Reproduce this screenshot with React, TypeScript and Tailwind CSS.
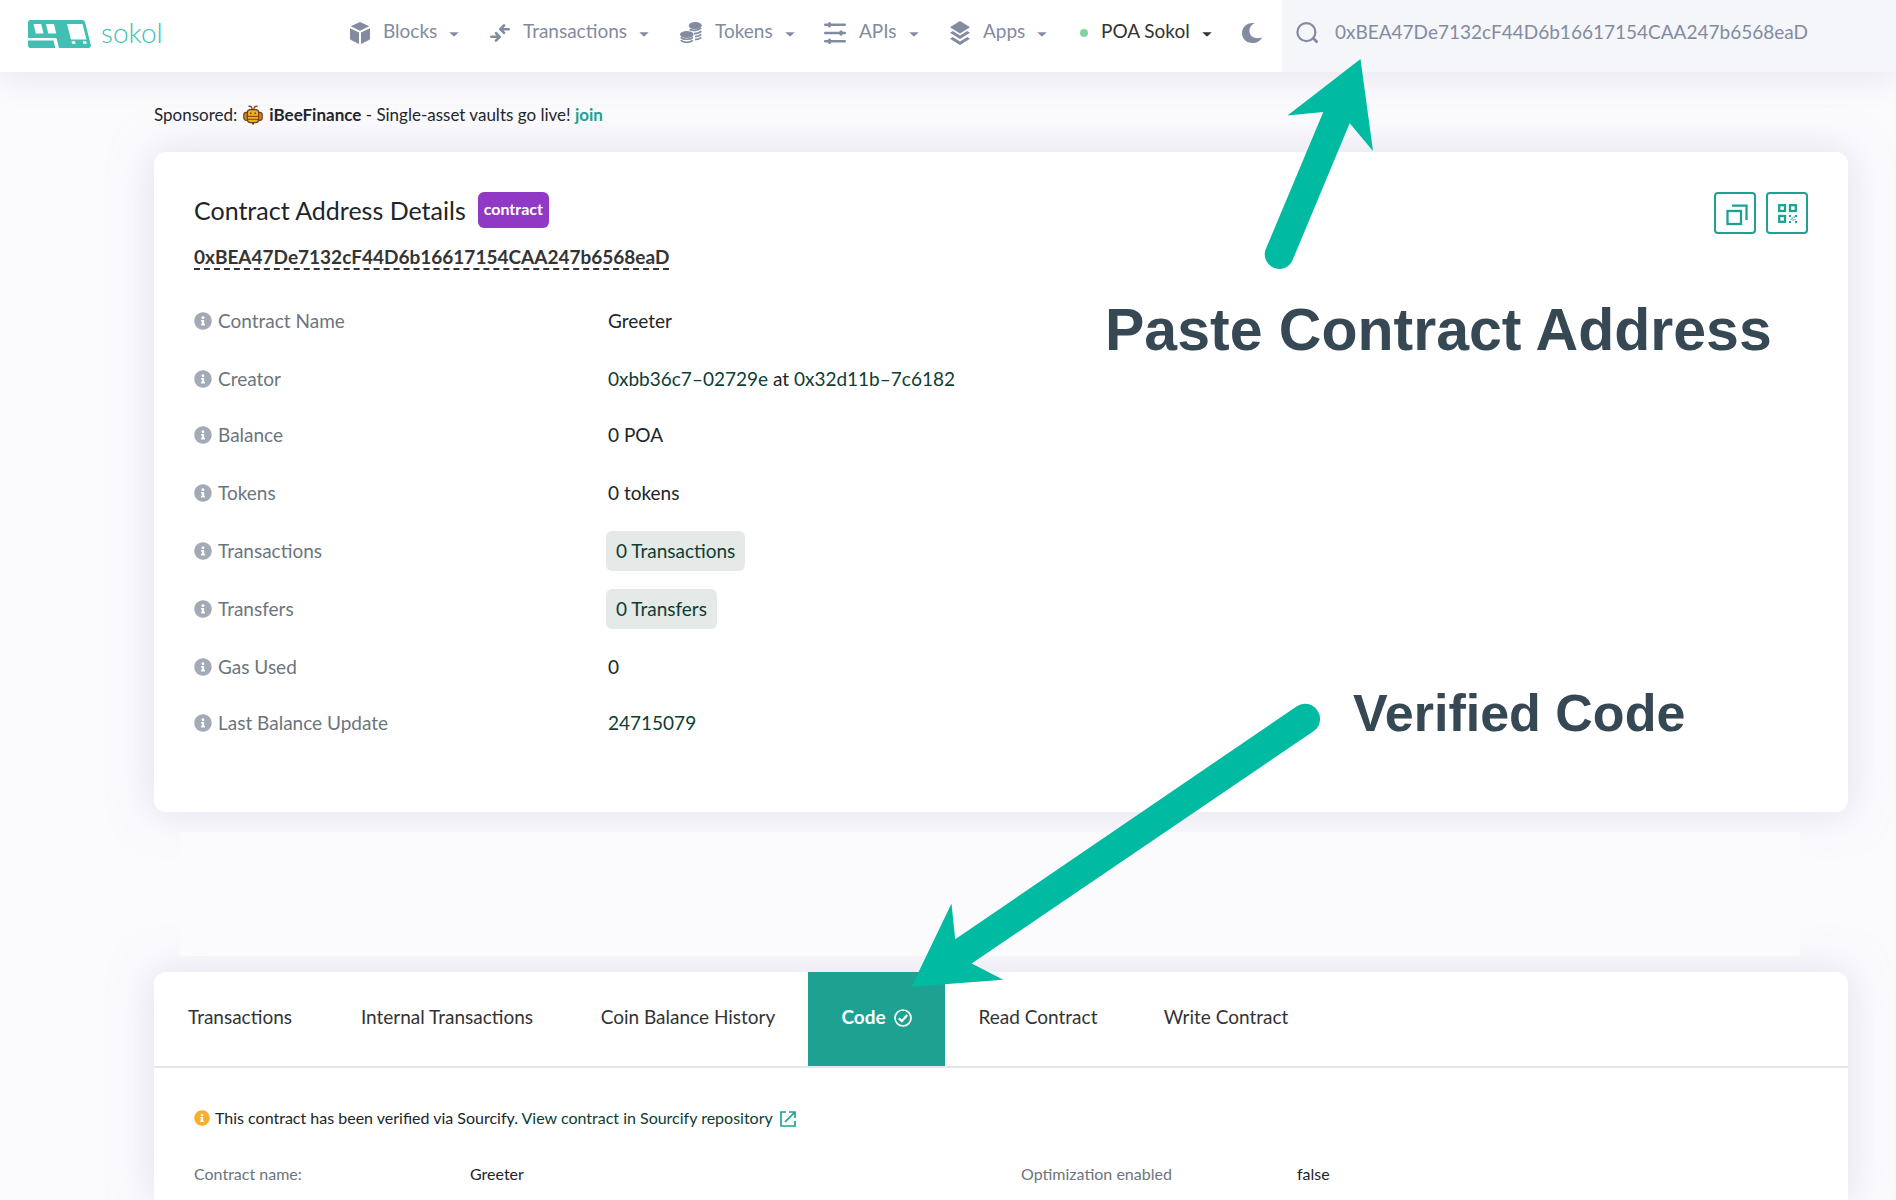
import { useState, type ReactNode } from "react";
import { FaInfoCircle } from "react-icons/fa";

function Caret() {
  return (
    <svg className="ml-3 mt-0.5 h-[5px] w-[10px] shrink-0" viewBox="0 0 10 5" fill="currentColor" aria-hidden="true">
      <path d="M.3.300h9.400L5.500 4.300h-1z" />
    </svg>
  );
}

function Logo() {
  return (
    <svg className="h-7 w-[63px]" viewBox="0 0 63 28" aria-hidden="true">
      <path
        fill="#40bfb2"
        fillRule="evenodd"
        d="M2.500 0H54c1.600 0 2.700.8 3.100 2.300L62.800 25c.4 1.700-.5 3-2.200 3H31l-2.300-9.300c-.1-.5-.5-.8-1-.8H0V2.500C0 1 1 0 2.500 0zM5.500 4l2.300 9.500h7.700L13.200 4zM18 4l2.300 9.500h7.900L26 4zM39 4l4 15.500h15.500L54.500 4zM43.500 21.300l.7 2.400h3.500l-.7-2.400zM54.700 21.300l.7 2.400h3.500l-.7-2.400z"
      />
      <path fill="#40bfb2" d="M0 20.500h25.500L27.300 28H2.500C1 28 0 27 0 25.500z" />
    </svg>
  );
}

function BlocksIcon() {
  return (
    <svg className="h-[22px] w-5" viewBox="0 0 20 22" fill="currentColor" aria-hidden="true">
      <path d="M10 0l9.200 4.200L10 8.800.8 4.200zM0 6.200l9 4.400V22l-8-4c-.6-.3-1-.8-1-1.500zM20 6.200l-9 4.400V22l8-4c.6-.3 1-.8 1-1.500z" />
    </svg>
  );
}

function TransactionsIcon() {
  return (
    <svg className="h-[18px] w-5" viewBox="0 0 20 18" fill="none" stroke="currentColor" strokeWidth="2.600" strokeLinecap="round" strokeLinejoin="round" aria-hidden="true">
      <path d="M18.700 5.200h-7.500M14 1.500l-3.700 3.700L14 8.900" />
      <path d="M1.300 12.800h7.500M6 9.100l3.700 3.700L6 16.500" />
    </svg>
  );
}

function TokensIcon() {
  return (
    <svg className="h-[22px] w-[22px]" viewBox="0 0 22 22" fill="currentColor" aria-hidden="true">
      <ellipse cx="15.300" cy="3.600" rx="6.500" ry="3.600" />
      <ellipse cx="6.800" cy="12.500" rx="6.800" ry="3.400" />
      <g fill="none" stroke="currentColor" strokeWidth="1.700">
        <path d="M9.500 7.300c3 1.800 9 1.400 11.700-1.300" />
        <path d="M14 11.600c3 0 5.600-.8 7.300-2.400M15 14.600c2.600-.1 4.800-.9 6.300-2.300M15 17.600c2.600-.1 4.800-.9 6.300-2.300" />
        <path d="M.7 15.300c2.500 2.600 9.700 2.600 12.200 0M.7 18.300c2.500 2.800 9.700 2.800 12.200 0" />
      </g>
    </svg>
  );
}

function ApisIcon() {
  return (
    <svg className="h-[22px] w-[22px]" viewBox="0 0 22 22" fill="currentColor" aria-hidden="true">
      <rect y="1.600" width="22" height="2.400" rx="1.200" />
      <rect y="9.800" width="22" height="2.400" rx="1.200" />
      <rect y="18" width="22" height="2.400" rx="1.200" />
      <rect x="4" y="0" width="3" height="5.600" rx="1.500" />
      <rect x="15.500" y="8.200" width="3" height="5.600" rx="1.500" />
      <rect x="4" y="16.400" width="3" height="5.600" rx="1.500" />
    </svg>
  );
}

function AppsIcon() {
  return (
    <svg className="h-6 w-5" viewBox="0 0 20 24" fill="currentColor" aria-hidden="true">
      <path d="M10 0l10 6.300-10 6.200L0 6.300z" />
      <path d="M0 11.800l2.700-1.700 7.300 4.500 7.300-4.500 2.700 1.700-10 6.200z" />
      <path d="M0 17.700l2.700-1.700 7.300 4.500 7.300-4.500 2.700 1.700L10 24z" />
    </svg>
  );
}

function MoonIcon() {
  return (
    <svg className="h-5 w-5" viewBox="0 0 20 20" fill="currentColor" aria-hidden="true">
      <path d="M12.600.2C8.400 2 6.700 6 7.700 9.800c1.100 4.200 5.700 6.800 12.300 4.600C18.500 17.900 14.800 20 10.500 20 4.500 20 0 15.700 0 10.200 0 4.300 5 -.8 12.600.2z" />
    </svg>
  );
}

function SearchIcon() {
  return (
    <svg className="h-[22px] w-[22px]" viewBox="0 0 22 22" fill="none" stroke="currentColor" strokeWidth="2.200" aria-hidden="true">
      <circle cx="10.400" cy="10.200" r="9" />
      <path d="M16.500 15.500l5 5" strokeWidth="2.800" />
    </svg>
  );
}

function BeeIcon() {
  return (
    <svg className="h-5 w-5" viewBox="0 0 20 20" aria-hidden="true">
      <path d="M5.500 1.500c2-1 3.500.5 3.500 2.500M14.500 1.500c-2-1-3.500.5-3.500 2.500" fill="none" stroke="#7b4a2a" strokeWidth="1.400" />
      <rect x=".8" y="7.400" width="18.400" height="8" rx="2.600" fill="#d98a1c" stroke="#6b3d22" strokeWidth="1.200" />
      <rect x="4.300" y="4.600" width="11.400" height="13" rx="3" fill="#f2b01f" stroke="#6b3d22" strokeWidth="1.200" />
      <path d="M5 11.400h10M5 14.400h10" stroke="#8a5424" strokeWidth="1.300" />
      <path d="M7 8.200h1.500M11.500 8.200H13" stroke="#6b3d22" strokeWidth="1.400" />
      <path d="M9 17.500h2v2H9z" fill="#6b3d22" />
    </svg>
  );
}

function CopyIcon() {
  return (
    <svg className="ml-1 mt-1 h-[22px] w-[22px]" viewBox="0 0 22 22" fill="none" stroke="currentColor" strokeWidth="2.300" aria-hidden="true">
      <rect x="1.500" y="7" width="13.500" height="13" />
      <path d="M6 1.700h14.500V16" />
    </svg>
  );
}

function QrIcon() {
  return (
    <svg className="h-[19px] w-[19px]" viewBox="0 0 19 19" fill="currentColor" aria-hidden="true">
      <g fill="none" stroke="currentColor" strokeWidth="2.300">
        <rect x="1.200" y="1.200" width="5.800" height="5.800" />
        <rect x="12" y="1.200" width="5.800" height="5.800" />
        <rect x="1.200" y="12" width="5.800" height="5.800" />
      </g>
      <path d="M11 11h2v2h-2zM17 11h2v2h-2zM13.500 13.500h1.300v1.300h-1.300zM15.500 12.500h1.300v1.300h-1.300zM14.500 15.500h1.300v1.300h-1.300zM11 17h2v2h-2zM17 17h2v2h-2zM12.500 15h1v1h-1zM16.500 15h1v1h-1z" />
    </svg>
  );
}

const navItems = [
  { label: "Blocks", icon: <BlocksIcon /> },
  { label: "Transactions", icon: <TransactionsIcon /> },
  { label: "Tokens", icon: <TokensIcon /> },
  { label: "APIs", icon: <ApisIcon /> },
  { label: "Apps", icon: <AppsIcon /> },
];

function Header() {
  const [query, setQuery] = useState("0xBEA47De7132cF44D6b16617154CAA247b6568eaD");
  return (
    <header className="flex h-[72px] bg-white text-[19px] text-[#828ba0] shadow-[0_0_40px_0_rgba(21,53,80,0.12)]">
      <a href="#home" className="flex flex-1 items-start gap-[10px] pl-7 pt-5" aria-label="sokol home">
        <Logo />
        <span className="-mt-1 text-[28px] font-light leading-8 text-[#40bfb2]">sokol</span>
      </a>
      <nav className="grid h-[66px] grid-cols-[140px_190px_144px_126px_130px_162px_40px] items-center">
        {navItems.map((item) => (
          <button key={item.label} type="button" className="flex items-center">
            {item.icon}
            <span className="-mt-1 ml-[13px]">{item.label}</span>
            <Caret />
          </button>
        ))}
        <button type="button" className="flex items-center text-[#333]">
          <span className="size-2 rounded-full bg-[#80d6a1]" />
          <span className="-mt-1 ml-[13px]">POA Sokol</span>
          <Caret />
        </button>
        <button type="button" aria-label="Dark mode">
          <MoonIcon />
        </button>
      </nav>
      <label className="flex w-[614px] bg-[#f5f6fa] pl-[14px]">
        <span className="flex h-[66px] items-center">
          <SearchIcon />
        </span>
        <input
          aria-label="Search"
          value={query}
          onChange={(e) => setQuery(e.target.value)}
          className="ml-[17px] h-[62px] flex-1 bg-transparent outline-none"
        />
      </label>
    </header>
  );
}

const link = "text-[#0d3d33]";

const details: { label: string; value: ReactNode; row: string }[] = [
  { label: "Contract Name", value: "Greeter", row: "h-[58px]" },
  {
    label: "Creator",
    value: (
      <>
        <a href="#creator" className={link}>0xbb36c7–02729e</a> at <a href="#tx" className={link}>0x32d11b–7c6182</a>
      </>
    ),
    row: "h-[58px]",
  },
  { label: "Balance", value: "0 POA", row: "h-14 pb-0.5" },
  { label: "Tokens", value: "0 tokens", row: "h-[58px]" },
  { label: "Transactions", value: <CountTile text="0 Transactions" />, row: "h-[58px]" },
  { label: "Transfers", value: <CountTile text="0 Transfers" />, row: "h-[58px]" },
  { label: "Gas Used", value: "0", row: "h-[58px]" },
  { label: "Last Balance Update", value: <a href="#block" className={link}>24715079</a>, row: "h-14 pb-0.5" },
];

function CountTile({ text }: { text: string }) {
  return (
    <a href="#list" className="-ml-0.5 flex h-10 items-center rounded-md bg-[#e5e9e7] px-[10px] text-[#0d3d33]">
      {text}
    </a>
  );
}

function DetailsCard() {
  return (
    <section className="rounded-xl bg-white p-10 shadow-[0_0_40px_0_rgba(202,199,226,0.5)]">
      <div className="flex items-start justify-between">
        <h1 className="flex items-center text-[25px] leading-9 text-[#212529]">
          Contract Address Details
          <span className="ml-3 h-9 rounded-md bg-[#9039c4] px-[6px] text-[16px] font-bold leading-[34px] text-white">contract</span>
        </h1>
        <div className="flex h-9 gap-[10px] text-[#1ea191]">
          <button type="button" aria-label="Copy address" className="flex size-[42px] items-center justify-center rounded-sm border-2 border-[#1ea191]">
            <CopyIcon />
          </button>
          <button type="button" aria-label="Show QR code" className="flex size-[42px] items-center justify-center rounded-sm border-2 border-[#1ea191]">
            <QrIcon />
          </button>
        </div>
      </div>
      <h2 className="mt-[18px] h-[62px] text-[19px] font-bold leading-[22px] text-[#333]">
        <span className="inline-block border-b-2 border-dashed border-[#333]">0xBEA47De7132cF44D6b16617154CAA247b6568eaD</span>
      </h2>
      <dl className="-mt-4 pb-5 text-[19px]">
        {details.map((d) => (
          <div key={d.label} className={`flex items-center ${d.row}`}>
            <dt className="flex w-[414px] items-center gap-[6px] text-[#6c757d]">
              <FaInfoCircle className="size-[18px] text-[#a3a9b5]" />
              {d.label}
            </dt>
            <dd className="text-[#212529]">{d.value}</dd>
          </div>
        ))}
      </dl>
    </section>
  );
}

const tabs = ["Transactions", "Internal Transactions", "Coin Balance History", "Code", "Read Contract", "Write Contract"];

function CodeCard() {
  const [active, setActive] = useState("Code");
  return (
    <section className="flex-1 overflow-hidden rounded-t-xl bg-white">
      <div role="tablist" className="grid h-24 grid-cols-[172px_242px_240px_137px_186px_190px] border-b-2 border-[#e2e5ec] text-[19px] text-[#333]">
        {tabs.map((t) => (
          <button
            key={t}
            type="button"
            role="tab"
            aria-selected={t === active}
            onClick={() => setActive(t)}
            className={`flex items-center justify-center gap-2 pb-1 ${t === active ? "bg-[#1ea191] font-bold text-white" : ""}`}
          >
            {t}
            {t === "Code" && (
              <svg className="mt-0.5 size-[18px]" viewBox="0 0 18 18" fill="none" stroke="currentColor" strokeWidth="1.700" aria-hidden="true">
                <circle cx="9" cy="9" r="8" />
                <path d="M4.800 9.200l3 2.900 5.400-6" strokeWidth="2.200" />
              </svg>
            )}
          </button>
        ))}
      </div>
      <div className="px-10 pt-[38px] text-[16px] leading-6 text-[#212529]">
        <p className="flex items-center">
          <FaInfoCircle className="mr-[5px] size-4 text-[#f7b02c]" />
          <span>
            This contract has been verified via Sourcify. <a href="#sourcify" className={link}>View contract in Sourcify repository</a>
          </span>
          <svg className="ml-[7px] mt-0.5 size-4 text-[#1ea191]" viewBox="0 0 16 16" fill="none" stroke="currentColor" strokeWidth="1.700" aria-hidden="true">
            <path d="M6 1H1v14h14v-5M9 1h6v6M15 1L5 11" />
          </svg>
        </p>
        <dl className="mt-8 grid grid-cols-2 gap-10">
          <div className="flex">
            <dt className="w-[276px] text-[#6c757d]">Contract name:</dt>
            <dd>Greeter</dd>
          </div>
          <div className="flex">
            <dt className="w-[276px] text-[#6c757d]">Optimization enabled</dt>
            <dd>false</dd>
          </div>
        </dl>
      </div>
    </section>
  );
}

function Annotations() {
  return (
    <div className="pointer-events-none absolute left-0 top-0 z-10 font-['Liberation_Sans',Arial,sans-serif] font-bold text-[#374855]">
      <svg className="h-[1000px] w-[1500px]" viewBox="0 0 1500 1000" fill="#00bba2" aria-hidden="true">
        <path d="M1360.500 59L1287.500 115.500 1323.300 112 1265.600 249.500A14.500 14.500 0 0 0 1292.400 260.500L1349.700 123.300 1373 151z" />
        <path d="M911.500 986.700L951.500 903.500 955.200 939.200 1296.500 706.500A15 15 0 0 1 1313.500 731.300L971.700 963.500 1003.300 979.800z" />
      </svg>
      <p className="absolute left-[1105px] top-[298px] whitespace-nowrap text-[59px] leading-[64px]">Paste Contract Address</p>
      <p className="absolute left-[1353px] top-[681px] whitespace-nowrap text-[52px] leading-[64px]">Verified Code</p>
    </div>
  );
}

export default function App() {
  return (
    <div className="relative flex min-h-screen flex-col overflow-hidden bg-[#fbfafd] font-[Lato,'Noto_Sans',sans-serif]">
      <Header />
      <main className="flex flex-1 flex-col pl-[154px] pr-12">
        <p className="flex h-20 items-center pt-1.5 text-[17px] text-[#212529]">
          Sponsored:
          <span className="mx-[6px]">
            <BeeIcon />
          </span>
          <span>
            <b>iBeeFinance</b> - Single-asset vaults go live! <a href="#join" className="font-bold text-[#1ea191]">join</a>
          </span>
        </p>
        <DetailsCard />
        <div className="relative z-[1] ml-[26px] mr-12 mt-5 h-[124px] bg-[#fbfbfd]" />
        <div className="mt-4 flex flex-1 flex-col rounded-t-xl shadow-[0_0_40px_0_rgba(202,199,226,0.5)]">
          <CodeCard />
        </div>
      </main>
      <Annotations />
    </div>
  );
}
